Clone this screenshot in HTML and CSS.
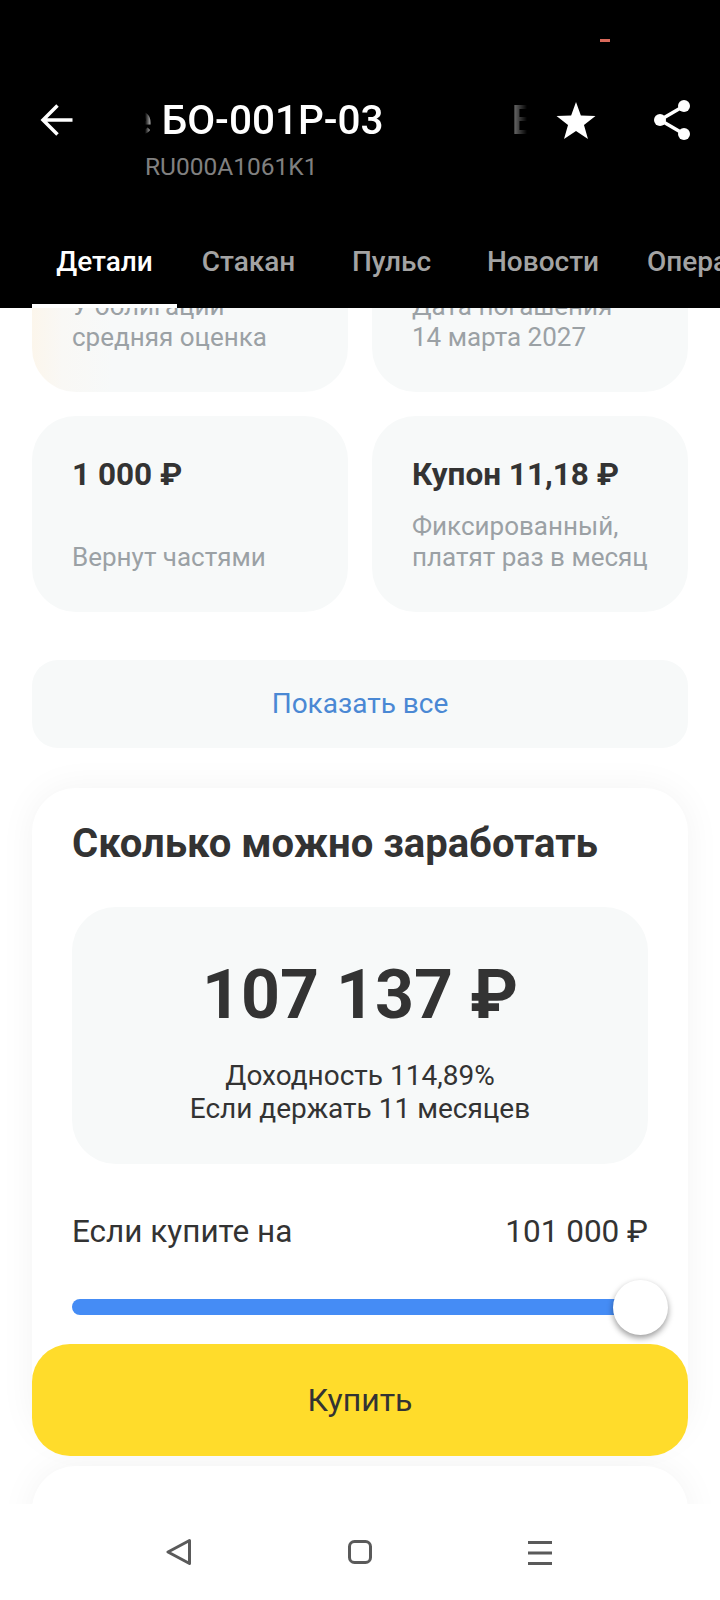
FILE: index.html
```html
<!DOCTYPE html>
<html lang="ru">
<head>
    <meta charset="UTF-8">
    <meta name="viewport" content="width=device-width, initial-scale=1.0">
    <title>БО-001Р-03</title>
    <link rel="stylesheet" href="styles.css">
</head>
<body>
    <header class="app-header">
        <div class="status-bar"><span class="status-dot"></span></div>
        <div class="toolbar">
            <svg class="back-icon" viewBox="0 0 32 32" fill="none" stroke="#fff" stroke-width="3.5">
                <path d="M32 16H3M17 1.5 2.5 16 17 30.5"/>
            </svg>
            <div class="title-block">
                <div class="title-clip"><span class="title-text">е БО-001Р-03</span><span class="title-next">Е</span></div>
                <div class="isin">RU000A1061K1</div>
            </div>
            <svg class="star-icon" viewBox="0 0 40 38" fill="#fff">
                <path d="M20 0 25 13.8 40 14.5 28.2 23.6 32.3 38 20 29.8 7.7 38 11.8 23.6 0 14.5 15 13.8Z"/>
            </svg>
            <svg class="share-icon" viewBox="0 0 36 40" fill="#fff">
                <circle cx="30" cy="6" r="6"/>
                <circle cx="6" cy="20" r="6"/>
                <circle cx="30" cy="34" r="6"/>
                <path d="M6 20 30 6M6 20 30 34" stroke="#fff" stroke-width="3.5"/>
            </svg>
        </div>
        <nav class="tabs">
            <div class="tab active">Детали</div>
            <div class="tab">Стакан</div>
            <div class="tab">Пульс</div>
            <div class="tab">Новости</div>
            <div class="tab">Операции</div>
        </nav>
    </header>

    <main class="content">
        <div class="facts">
            <div class="fact fact-warm">
                <div class="fact-top">У облигации</div>
                <div class="fact-note">средняя оценка</div>
            </div>
            <div class="fact">
                <div class="fact-top">Дата погашения</div>
                <div class="fact-note">14 марта 2027</div>
            </div>
            <div class="fact fact-split">
                <div class="fact-value">1 000 ₽</div>
                <div class="fact-note">Вернут частями</div>
            </div>
            <div class="fact fact-split">
                <div class="fact-value">Купон 11,18 ₽</div>
                <div class="fact-note">Фиксированный,<br>платят раз в месяц</div>
            </div>
        </div>

        <div class="show-all">Показать все</div>

        <section class="earn-card">
            <h2 class="earn-title">Сколько можно заработать</h2>
            <div class="earn-box">
                <div class="earn-sum">107 137 ₽</div>
                <div class="earn-note">Доходность 114,89%<br>Если держать 11 месяцев</div>
            </div>
            <div class="earn-row">
                <span>Если купите на</span>
                <span>101 000 ₽</span>
            </div>
            <div class="slider"><span class="slider-thumb"></span></div>
        </section>

        <section class="next-card"></section>

        <button class="buy-button">Купить</button>
    </main>

    <footer class="nav-bar">
        <svg class="nav-icon" viewBox="0 0 26 26" fill="none" stroke="#5a5a5a" stroke-width="3" stroke-linejoin="round">
            <path d="M23.5 1.5 2 13 23.5 24.5Z"/>
        </svg>
        <svg class="nav-icon" viewBox="0 0 26 26" fill="none" stroke="#5a5a5a" stroke-width="3">
            <rect x="2.5" y="2.5" width="21" height="21" rx="5"/>
        </svg>
        <svg class="nav-icon" viewBox="0 0 26 26" fill="none" stroke="#5a5a5a" stroke-width="3">
            <path d="M0 3.5H24M0 14H24M0 24.5H24"/>
        </svg>
    </footer>
</body>
</html>
```

FILE: styles.css
```css
* { box-sizing: border-box; }

body {
    margin: 0;
    width: 720px;
    height: 1600px;
    overflow: hidden;
    display: flex;
    flex-direction: column;
    background-color: #fff;
    color: #333;
    font-family: 'Roboto', 'Liberation Sans', sans-serif;
}

/* шапка */
.app-header {
    height: 308px;
    flex: none;
    background-color: #000;
    color: #fff;
    position: relative;
    z-index: 2;
}

.status-bar {
    height: 92px;
    padding-top: 39px;
    padding-left: 600px;
}

.status-dot {
    display: block;
    width: 10px;
    height: 3px;
    background-color: #d9695a;
}

.toolbar {
    display: flex;
    align-items: flex-start;
    height: 136px;
    padding-left: 40px;
}

.back-icon {
    width: 33px;
    height: 32px;
    margin-top: 12px;
    flex: none;
}

.title-block {
    width: 382px;
    margin-left: 72px;
    flex: none;
}

.title-clip {
    display: flex;
    overflow: hidden;
    white-space: nowrap;
    font-size: 40.5px;
    font-weight: 500;
    line-height: 56px;
    -webkit-mask-image: linear-gradient(to right, transparent 0, #000 8px, #000 350px, transparent 382px);
    mask-image: linear-gradient(to right, transparent 0, #000 8px, #000 350px, transparent 382px);
}

.title-text {
    margin-left: -15px;
}

.title-next {
    margin-left: 128px;
}

.isin {
    margin-top: 5px;
    font-size: 24.5px;
    line-height: 28px;
    color: #808080;
}

.star-icon {
    width: 40px;
    height: 37px;
    margin-left: 29px;
    margin-top: 10px;
    flex: none;
}

.share-icon {
    width: 36px;
    height: 40px;
    margin-left: 58px;
    margin-top: 8px;
    flex: none;
}

.tabs {
    display: flex;
    padding-left: 32px;
    height: 80px;
    overflow: hidden;
}

.tab {
    min-width: 143px;
    flex: none;
    padding: 18px 24px 0;
    text-align: center;
    font-size: 28px;
    font-weight: 500;
    line-height: 32px;
    color: #a3a3a3;
}

.tab.active {
    min-width: 145px;
    color: #fff;
    box-shadow: inset 0 -4px 0 #fff;
}

/* контент */
.content {
    flex: 1;
    overflow: hidden;
    position: relative;
    padding: 0 32px;
}

.facts {
    display: grid;
    grid-template-columns: 316px 316px;
    gap: 24px;
    margin-top: -108px;
}

.fact {
    height: 192px;
    padding: 0 24px 39px 40px;
    border-radius: 44px;
    background-color: #f7f9f9;
    display: flex;
    flex-direction: column;
    justify-content: flex-end;
    font-size: 26px;
    line-height: 31px;
    color: #9ba1a5;
}

.fact-warm {
    background: linear-gradient(to right, #fcf6ec 0, #f9f8f5 30px, #f7f9f9 80px);
}

.fact-split {
    height: 196px;
    justify-content: flex-start;
    padding-top: 41px;
    padding-bottom: 0;
}

.fact-split .fact-note {
    flex: 1;
    display: flex;
    align-items: flex-end;
    padding-bottom: 39px;
}

.fact-value {
    font-size: 31.5px;
    font-weight: 700;
    line-height: 36px;
    color: #333;
}

.show-all {
    margin-top: 48px;
    height: 88px;
    border-radius: 26px;
    background-color: #f7f9f9;
    color: #4a88d4;
    font-size: 28px;
    line-height: 88px;
    text-align: center;
}

.earn-card {
    margin-top: 40px;
    height: 654px;
    padding: 32px 40px 0;
    border-radius: 44px;
    background-color: #fff;
    box-shadow: 0 0 36px rgba(0, 0, 0, 0.05);
}

.earn-title {
    margin: 0;
    font-size: 40px;
    font-weight: 700;
    line-height: 48px;
}

.earn-box {
    margin-top: 39px;
    height: 257px;
    padding-top: 48px;
    border-radius: 44px;
    background-color: #f7f9f9;
    text-align: center;
}

.earn-sum {
    font-size: 68px;
    font-weight: 700;
    line-height: 80px;
}

.earn-note {
    margin-top: 24px;
    font-size: 28px;
    line-height: 33px;
}

.earn-row {
    display: flex;
    justify-content: space-between;
    margin-top: 48px;
    font-size: 31.5px;
    line-height: 40px;
}

.slider {
    position: relative;
    margin-top: 47px;
    height: 16px;
    border-radius: 8px;
    background-color: #458cf5;
}

.slider-thumb {
    position: absolute;
    right: -20px;
    top: -19px;
    width: 55px;
    height: 55px;
    border-radius: 50%;
    background-color: #fff;
    box-shadow: 0 3px 6px rgba(0, 0, 0, 0.4);
}

.next-card {
    margin-top: 24px;
    height: 120px;
    border-radius: 44px;
    background-color: #fff;
    box-shadow: 0 0 36px rgba(0, 0, 0, 0.05);
}

.buy-button {
    position: absolute;
    left: 32px;
    right: 32px;
    top: 1036px;
    height: 112px;
    border: none;
    border-radius: 38px;
    background-color: #ffdc2b;
    color: #333;
    font-family: inherit;
    font-size: 32px;
}

/* системная панель */
.nav-bar {
    height: 96px;
    flex: none;
    background-color: #fff;
    position: relative;
    display: flex;
    justify-content: center;
    gap: 155px;
    padding-top: 35px;
}

.nav-icon {
    width: 26px;
    height: 26px;
}
```
